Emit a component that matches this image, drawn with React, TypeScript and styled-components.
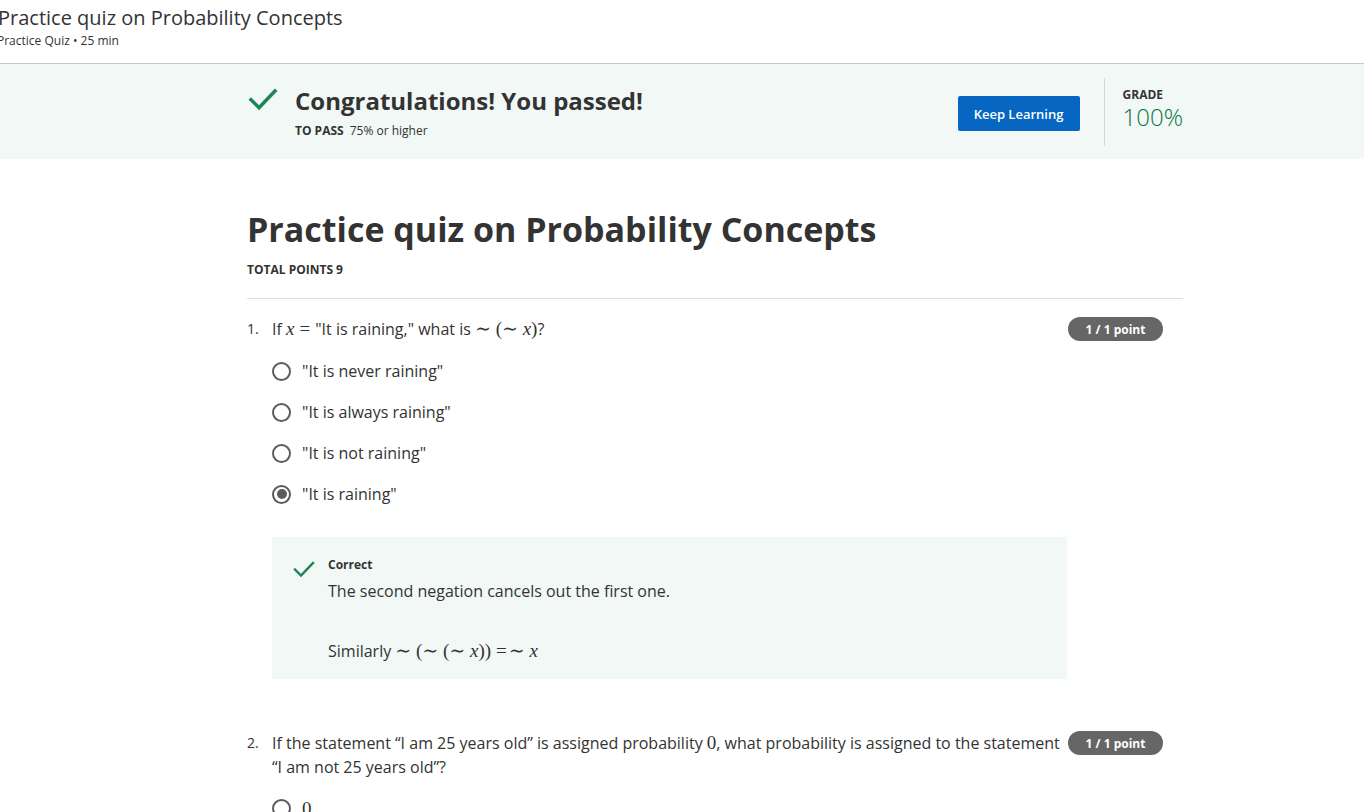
import React from "react";
import styled, { createGlobalStyle } from "styled-components";

const Global = createGlobalStyle`
  html, body { margin: 0; padding: 0; background: #fff; }
  body { font-family: "Open Sans", "Noto Sans", sans-serif; color: #333; overflow: hidden; }
  * { box-sizing: border-box; }
`;

const Header = styled.header`
  height: 64px;
  border-bottom: 1px solid #c8c8c8;
  padding: 5px 0 0 0;
  margin-left: -2px;
`;
const HeaderTitle = styled.div`
  font-size: 20px;
  line-height: 26px;
  color: #333;
`;
const HeaderSub = styled.div`
  font-size: 12px;
  line-height: 16px;
  color: #333;
  margin: 2px 0 0 -1px;
`;

const Banner = styled.section`
  background: #f1f8f6;
  height: 95px;
  display: flex;
  align-items: center;
  padding-left: 247px;
`;
const BannerInner = styled.div`
  width: 936px;
  display: flex;
  align-items: center;
`;
const Passed = styled.div`
  display: flex;
  align-items: flex-start;
  flex: 1;
`;
const CheckWrap = styled.div<{ $size: number }>`
  width: ${(p) => p.$size}px;
  height: ${(p) => p.$size}px;
  display: flex;
  align-items: center;
  justify-content: center;
  flex-shrink: 0;
`;
const PassedText = styled.div`
  margin-left: 16px;
  margin-top: 3px;
`;
const PassedHeading = styled.div`
  font-size: 24px;
  font-weight: 700;
  line-height: 32px;
  color: #333;
  margin-top: -1px;
`;
const PassedSub = styled.div`
  font-size: 12px;
  line-height: 18px;
  margin-top: 5px;
  color: #333;
  b { font-weight: 700; margin-right: 6px; }
`;
const KeepButton = styled.button`
  width: 122px;
  height: 35px;
  margin-top: 4px;
  background: #0666c1;
  color: #fff;
  border: none;
  border-radius: 2px;
  font-family: "Open Sans", sans-serif;
  font-size: 13px;
  font-weight: 600;
  padding: 0;
  margin-left: -1px;
`;
const VDivider = styled.div`
  width: 1px;
  height: 68px;
  background: #d6d6d6;
  margin: 0 18px 0 24px;
`;
const Grade = styled.div`
  display: flex;
  flex-direction: column;
  margin-top: -5px;
`;
const GradeLabel = styled.div`
  font-size: 12px;
  font-weight: 700;
  line-height: 16px;
  color: #333;
`;
const GradeValue = styled.div`
  font-size: 24px;
  font-weight: 300;
  line-height: 28px;
  color: #0f7444;
`;

const Main = styled.main`
  padding-left: 247px;
`;
const Content = styled.div`
  width: 936px;
`;
const QuizTitle = styled.h1`
  margin: 48px 0 0 0;
  font-size: 34px;
  line-height: 44px;
  font-weight: 700;
  color: #333;
`;
const TotalPoints = styled.div`
  margin-top: 11px;
  font-size: 12px;
  font-weight: 700;
  line-height: 16px;
  color: #333;
`;
const HRule = styled.hr`
  border: none;
  border-top: 1px solid #dcdcdc;
  margin: 20px 0 0 0;
`;

const Question = styled.div<{ $top: number }>`
  margin-top: ${(p) => p.$top}px;
`;
const QuestionRow = styled.div`
  display: flex;
  align-items: flex-start;
  padding-right: 20px;
`;
const QNum = styled.div`
  width: 25px;
  font-size: 14px;
  line-height: 24px;
  flex-shrink: 0;
`;
const QText = styled.div`
  flex: 1;
  font-size: 16px;
  line-height: 24px;
  color: #333;
`;
const Badge = styled.div`
  flex-shrink: 0;
  width: 95px;
  height: 24px;
  border-radius: 12px;
  background: #666;
  color: #fff;
  font-size: 12px;
  font-weight: 700;
  display: flex;
  align-items: center;
  justify-content: center;
  margin-left: 8px;
`;
const Math = styled.span`
  font-family: "Liberation Serif", "DejaVu Serif", serif;
  font-size: 19px;
  line-height: 1;
  i { font-style: italic; }
`;
const Rel = styled.span`
  margin: 0 5px;
`;
const Options = styled.div<{ $top: number }>`
  margin: ${(p) => p.$top}px 0 0 25px;
  display: flex;
  flex-direction: column;
  gap: 17px;
`;
const Option = styled.label`
  display: flex;
  align-items: center;
  font-size: 16px;
  line-height: 24px;
  color: #333;
`;
const Radio = styled.span<{ $checked?: boolean }>`
  width: 19px;
  height: 19px;
  border-radius: 50%;
  border: 2px solid #5c5c5c;
  margin-right: 11px;
  display: flex;
  align-items: center;
  justify-content: center;
  flex-shrink: 0;
  &::after {
    content: "";
    display: ${(p) => (p.$checked ? "block" : "none")};
    width: 10px;
    height: 10px;
    border-radius: 50%;
    background: #5c5c5c;
  }
`;
const Feedback = styled.div`
  margin: 31px 0 0 25px;
  width: 795px;
  background: #f1f8f6;
  display: flex;
  align-items: flex-start;
  padding: 20px 20px 16px 20px;
`;
const FeedbackBody = styled.div`
  margin-left: 12px;
  margin-top: -1px;
`;
const FeedbackLabel = styled.div`
  font-size: 12px;
  font-weight: 700;
  line-height: 18px;
  color: #333;
`;
const FeedbackPara = styled.p<{ $gap: number }>`
  margin: ${(p) => p.$gap}px 0 0 0;
  font-size: 16px;
  line-height: 24px;
  color: #333;
`;

const Check = ({ size, stroke }: { size: number; stroke: number }) => (
  <svg width={size} height={size} viewBox="0 0 24 24" fill="none">
    <path d="M3 12.5 L9 18.5 L21 6" stroke="#1f8354" strokeWidth={stroke} strokeLinecap="square" />
  </svg>
);

const Sim = () => <span>∼</span>;

export default function App() {
  return (
    <>
      <Global />
      <Header>
        <HeaderTitle>Practice quiz on Probability Concepts</HeaderTitle>
        <HeaderSub>Practice Quiz • 25 min</HeaderSub>
      </Header>
      <Banner>
        <BannerInner>
          <Passed>
            <CheckWrap $size={32}>
              <Check size={32} stroke={2.6} />
            </CheckWrap>
            <PassedText>
              <PassedHeading>Congratulations! You passed!</PassedHeading>
              <PassedSub>
                <b>TO PASS</b>75% or higher
              </PassedSub>
            </PassedText>
          </Passed>
          <KeepButton>Keep Learning</KeepButton>
          <VDivider />
          <Grade>
            <GradeLabel>GRADE</GradeLabel>
            <GradeValue>100%</GradeValue>
          </Grade>
        </BannerInner>
      </Banner>
      <Main>
        <Content>
          <QuizTitle>Practice quiz on Probability Concepts</QuizTitle>
          <TotalPoints>TOTAL POINTS 9</TotalPoints>
          <HRule />

          <Question $top={18}>
            <QuestionRow>
              <QNum>1.</QNum>
              <QText>
                If{" "}
                <Math>
                  <i>x</i>
                  <Rel>=</Rel>
                </Math>
                "It is raining," what is{" "}
                <Math>
                  <Sim /> (<Sim /> <i>x</i>)
                </Math>
                ?
              </QText>
              <Badge>1 / 1 point</Badge>
            </QuestionRow>
            <Options $top={18}>
              <Option>
                <Radio />
                "It is never raining"
              </Option>
              <Option>
                <Radio />
                "It is always raining"
              </Option>
              <Option>
                <Radio />
                "It is not raining"
              </Option>
              <Option>
                <Radio $checked />
                "It is raining"
              </Option>
            </Options>
            <Feedback>
              <CheckWrap $size={24}>
                <Check size={24} stroke={2.4} />
              </CheckWrap>
              <FeedbackBody>
                <FeedbackLabel>Correct</FeedbackLabel>
                <FeedbackPara $gap={5}>The second negation cancels out the first one.</FeedbackPara>
                <FeedbackPara $gap={36}>
                  Similarly{" "}
                  <Math>
                    <Sim /> (<Sim /> (<Sim /> <i>x</i>))<Rel style={{ marginRight: 2 }}>=</Rel>
                    <Sim /> <i>x</i>
                  </Math>
                </FeedbackPara>
              </FeedbackBody>
            </Feedback>
          </Question>

          <Question $top={52}>
            <QuestionRow>
              <QNum>2.</QNum>
              <QText>
                If the statement “I am 25 years old” is assigned probability <Math>0</Math>, what probability is
                assigned to the statement “I am not 25 years old”?
              </QText>
              <Badge>1 / 1 point</Badge>
            </QuestionRow>
            <Options $top={20}>
              <Option>
                <Radio />
                <Math>0</Math>
              </Option>
            </Options>
          </Question>
        </Content>
      </Main>
    </>
  );
}
